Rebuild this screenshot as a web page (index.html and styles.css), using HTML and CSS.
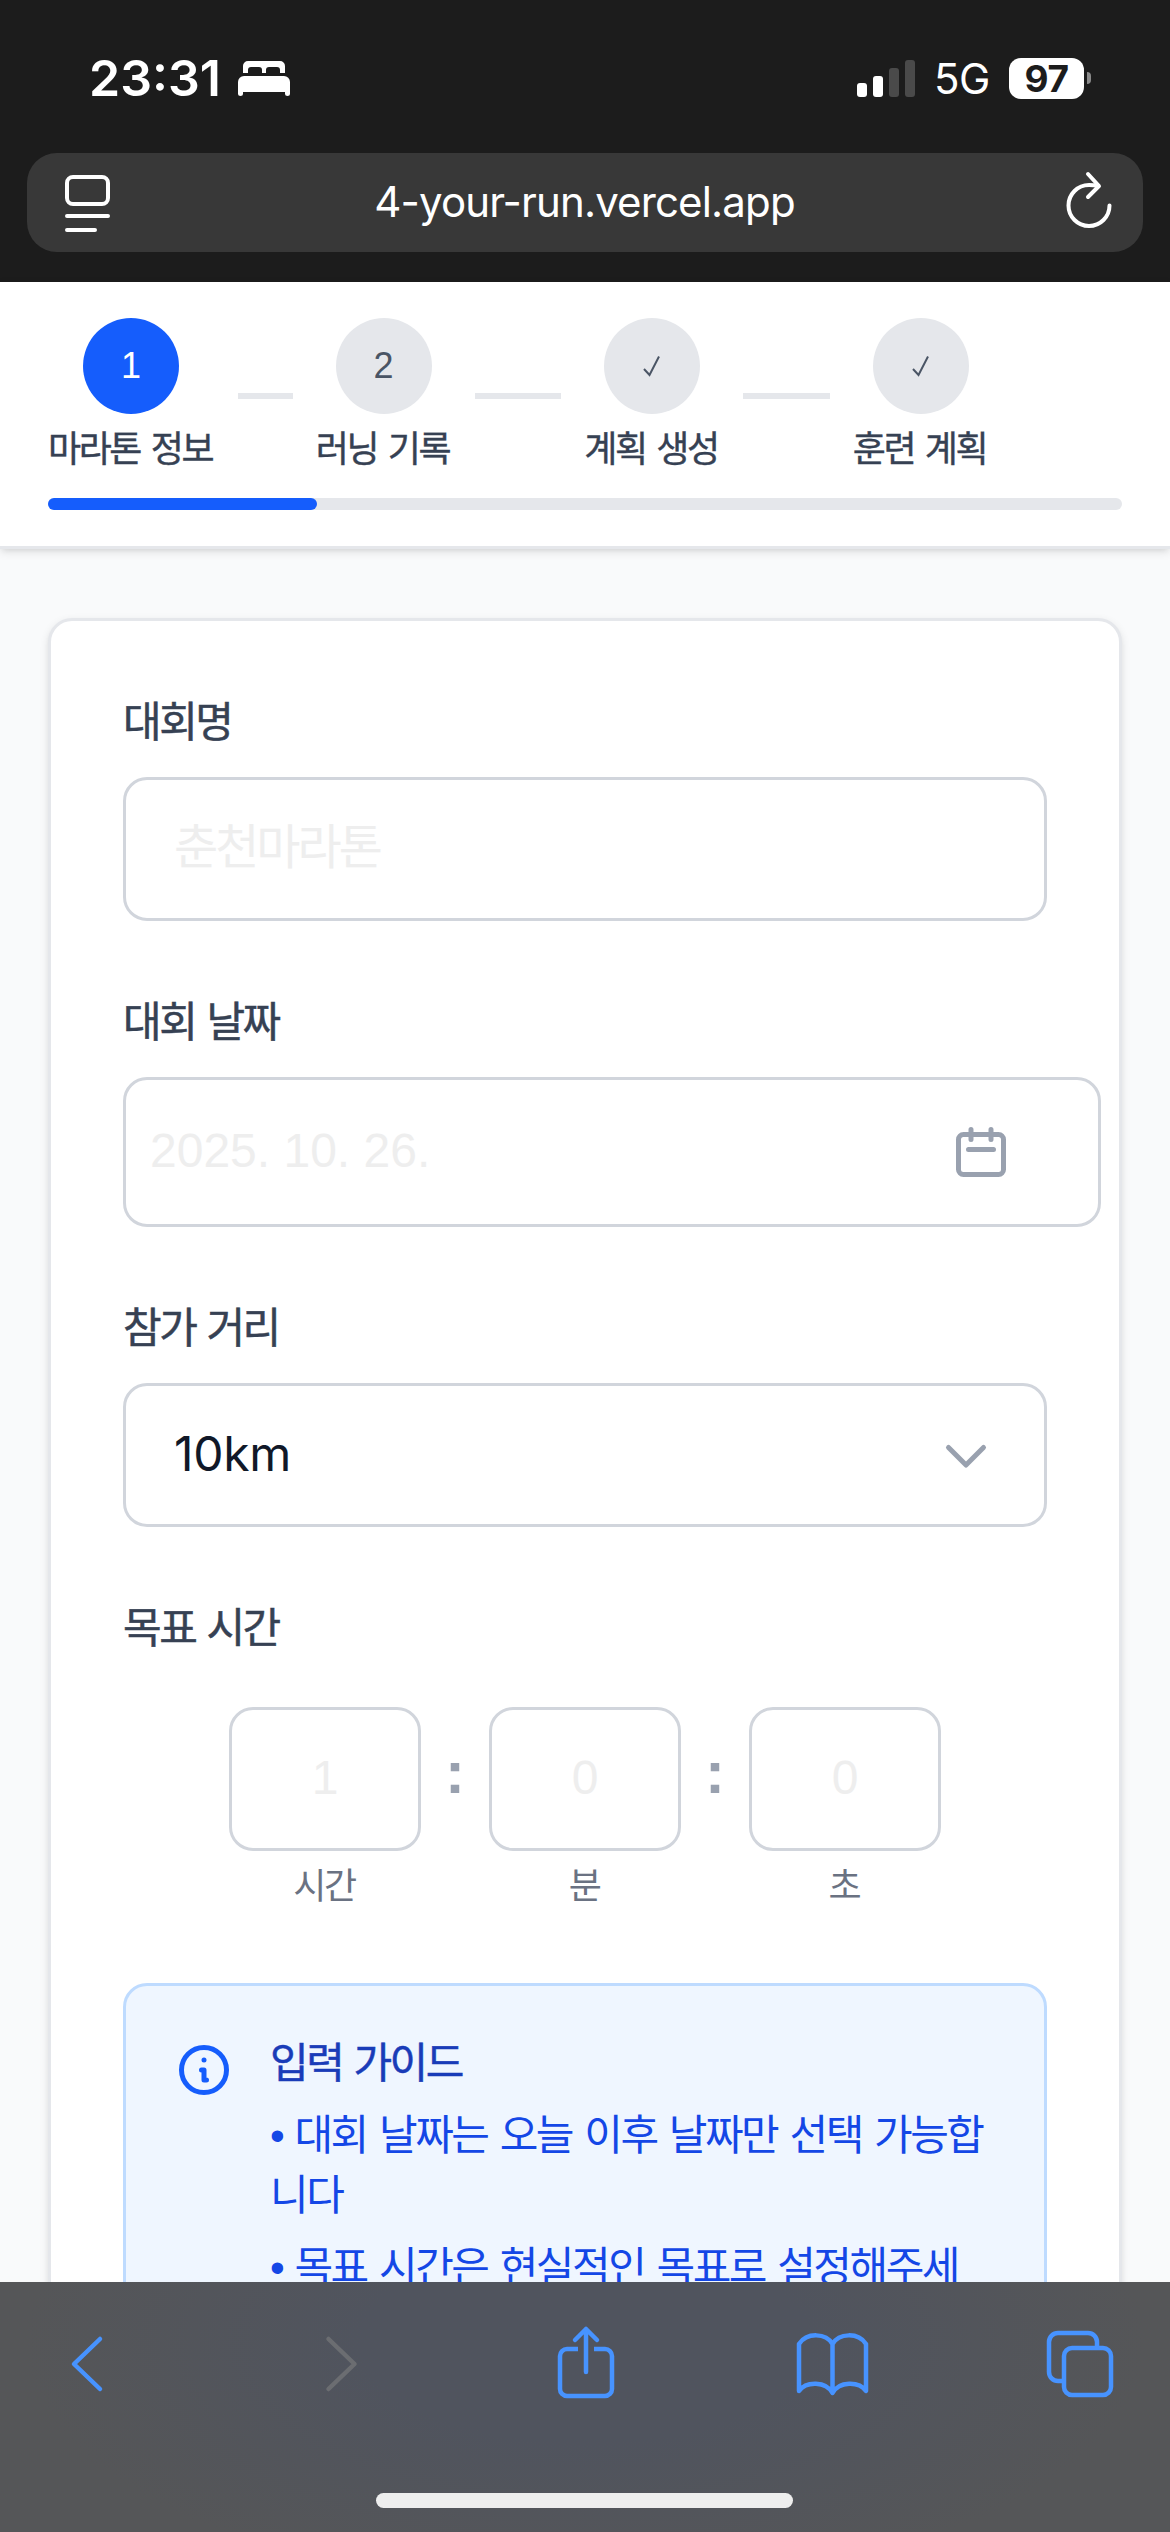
FILE: index.html
```html
<!DOCTYPE html>
<html lang="ko">
<head>
    <meta charset="UTF-8">
    <meta name="viewport" content="width=device-width, initial-scale=1.0">
    <title>4 Your Run</title>
    <link rel="stylesheet" href="styles.css">
</head>
<body>
    <div class="screen">
        <header class="browser-top">
            <div class="status-bar">
                <div class="status-left">
                    <span class="time">23:31</span>
                    <svg class="bed" width="52" height="36" viewBox="0 0 52 36" fill="#fff">
                        <path d="M5 12V5a5 5 0 0 1 5-5h32a5 5 0 0 1 5 5v7h-5V9a3 3 0 0 0-3-3h-8a3 3 0 0 0-3 3v3h-4V9a3 3 0 0 0-3-3h-8a3 3 0 0 0-3 3v3z"/>
                        <path d="M0 21a6 6 0 0 1 6-6h40a6 6 0 0 1 6 6v12q0 2-2.500 2T47 33v-2H5v2q0 2-2.500 2T0 33z"/>
                    </svg>
                </div>
                <div class="status-right">
                    <svg width="59" height="37" viewBox="0 0 59 37">
                        <rect x="0" y="23" width="10" height="14" rx="3" fill="#fff"/>
                        <rect x="16" y="16" width="10" height="21" rx="3" fill="#fff"/>
                        <rect x="32" y="8" width="10" height="29" rx="3" fill="#4a4a4a"/>
                        <rect x="48" y="0" width="10" height="37" rx="3" fill="#4a4a4a"/>
                    </svg>
                    <span class="network">5G</span>
                    <div class="battery">97</div>
                    <div class="battery-tip"></div>
                </div>
            </div>
            <div class="address-bar">
                <svg width="46" height="58" viewBox="0 0 46 58" fill="none" stroke="#fff" stroke-width="4" stroke-linecap="round">
                    <rect x="2" y="3" width="41" height="27" rx="6"/>
                    <path d="M2 42h41M2 56h28"/>
                </svg>
                <span class="url">4-your-run.vercel.app</span>
                <svg class="reload" width="48" height="58" viewBox="0 0 48 58" fill="none" stroke="#fff" stroke-width="4" stroke-linecap="round" stroke-linejoin="round">
                    <path d="M44.500 34.500a20.500 20.500 0 1 1-20.500-20.500q5 0 9 .800"/>
                    <path d="M23 3l11 12-11 11"/>
                </svg>
            </div>
        </header>

        <nav class="progress-nav">
            <div class="steps">
                <div class="step">
                    <div class="step-item step-first">
                        <div class="circle active">1</div>
                        <span class="step-label">마라톤 정보</span>
                    </div>
                    <div class="connector"></div>
                </div>
                <div class="step">
                    <div class="step-item">
                        <div class="circle">2</div>
                        <span class="step-label">러닝 기록</span>
                    </div>
                    <div class="connector"></div>
                </div>
                <div class="step">
                    <div class="step-item">
                        <div class="circle">
                            <svg width="20" height="22" viewBox="0 0 20 22" fill="none" stroke="#4a5565" stroke-width="2"><path d="M2 14l5.500 6L17 1.500"/></svg>
                        </div>
                        <span class="step-label">계획 생성</span>
                    </div>
                    <div class="connector"></div>
                </div>
                <div class="step">
                    <div class="step-item">
                        <div class="circle">
                            <svg width="20" height="22" viewBox="0 0 20 22" fill="none" stroke="#4a5565" stroke-width="2"><path d="M2 14l5.500 6L17 1.500"/></svg>
                        </div>
                        <span class="step-label">훈련 계획</span>
                    </div>
                </div>
            </div>
            <div class="progress-track">
                <div class="progress-fill" style="width: 25%"></div>
            </div>
        </nav>

        <main class="content">
            <form class="card">
                <div class="field">
                    <div class="label">대회명</div>
                    <div class="input placeholder">춘천마라톤</div>
                </div>

                <div class="field">
                    <div class="label">대회 날짜</div>
                    <div class="input date">
                        <span>2025. 10. 26.</span>
                        <svg class="icon" viewBox="0 0 24 24"><path d="M8 7V3m8 4V3m-9 8h10M5 21h14a2 2 0 002-2V7a2 2 0 00-2-2H5a2 2 0 00-2 2v12a2 2 0 002 2z"/></svg>
                    </div>
                </div>

                <div class="field">
                    <div class="label">참가 거리</div>
                    <div class="input select">
                        <span>10km</span>
                        <svg class="icon" viewBox="0 0 24 24"><path d="M19 9l-7 7-7-7"/></svg>
                    </div>
                </div>

                <div class="field">
                    <div class="label">목표 시간</div>
                    <div class="time-row">
                        <div class="time-unit">
                            <div class="time-box">1</div>
                            <span>시간</span>
                        </div>
                        <span class="colon">:</span>
                        <div class="time-unit">
                            <div class="time-box">0</div>
                            <span>분</span>
                        </div>
                        <span class="colon">:</span>
                        <div class="time-unit">
                            <div class="time-box">0</div>
                            <span>초</span>
                        </div>
                    </div>
                </div>

                <div class="guide">
                    <svg class="icon info" viewBox="0 0 24 24"><path d="M13 16h-1v-4h-1m1-4h.01M21 12a9 9 0 11-18 0 9 9 0 0118 0z"/></svg>
                    <div class="guide-text">
                        <h3>입력 가이드</h3>
                        <p>• 대회 날짜는 오늘 이후 날짜만 선택 가능합<br>니다</p>
                        <p>• 목표 시간은 현실적인 목표로 설정해주세</p>
                    </div>
                </div>
            </form>
        </main>

        <footer class="toolbar">
            <div class="tools">
                <svg viewBox="0 0 80 80"><path d="M54 15L28 40l26 25"/></svg>
                <svg class="disabled" viewBox="0 0 80 80"><path d="M33.500 15l26 25-26 25"/></svg>
                <svg viewBox="0 0 80 80">
                    <path stroke-linecap="butt" d="M34 25H23a7 7 0 0 0-7 7v33a7 7 0 0 0 7 7h38a7 7 0 0 0 7-7V32a7 7 0 0 0-7-7H50"/>
                    <path d="M42 48V5M31 16L42 5l11 11"/>
                </svg>
                <svg viewBox="0 0 80 80">
                    <path d="M39.500 20V67M39.500 20C33 9 14 8 6 20v47c7-10 27-10 33.500 2 6.500-12 26.500-12 33.500-2V20C65 8 46 9 39.500 20z"/>
                </svg>
                <svg viewBox="0 0 80 80">
                    <path stroke-linecap="butt" d="M20 57h-4a9 9 0 0 1-9-9V18a9 9 0 0 1 9-9h30a9 9 0 0 1 9 9v4"/>
                    <rect x="22" y="24" width="47" height="47" rx="8"/>
                </svg>
            </div>
            <div class="home-indicator"></div>
        </footer>
    </div>
</body>
</html>
```
FILE: styles.css
```css
* {
    box-sizing: border-box;
}
body {
    margin: 0;
    font-family: "Liberation Sans", "Noto Sans CJK KR", sans-serif;
    background: #f9fafb;
}
svg {
    display: block;
    flex-shrink: 0;
}
.screen {
    display: flex;
    flex-direction: column;
    width: 1170px;
    height: 2532px;
    overflow: hidden;
}

/* browser top */
.browser-top {
    flex: none;
    height: 282px;
    padding: 48px 27px 0;
    background: #1c1c1c;
    color: #fff;
    font-family: Inter, sans-serif;
}
.status-bar {
    display: flex;
    justify-content: space-between;
    height: 105px;
    padding: 0 52px 0 62px;
}
.status-left,
.status-right {
    display: flex;
    align-items: center;
    height: 60px;
}
.time {
    width: 149px;
    font-size: 50px;
    font-weight: 600;
}
.bed {
    margin-top: 2px;
}
.network {
    width: 76px;
    margin-left: 18px;
    font-size: 42px;
    letter-spacing: -0.5px;
}
.battery {
    width: 75px;
    height: 41px;
    margin-left: -1px;
    border-radius: 12px;
    background: #fff;
    color: #1c1c1c;
    font-size: 37px;
    font-weight: 700;
    line-height: 41px;
    letter-spacing: -0.5px;
    text-align: center;
}
.battery-tip {
    width: 4px;
    height: 12px;
    margin-left: 3px;
    border-radius: 0 6px 6px 0;
    background: #8a8a8a;
}
.address-bar {
    display: flex;
    align-items: center;
    justify-content: space-between;
    height: 99px;
    padding: 0 30px 0 38px;
    border-radius: 30px;
    background: #383838;
}
.url {
    margin-right: 7px;
    padding-bottom: 1px;
    font-size: 42px;
    line-height: 60px;
    letter-spacing: -0.85px;
}
.reload {
    margin-bottom: 5px;
}

/* steps */
.progress-nav {
    position: relative;
    flex: none;
    padding: 36px 48px;
    background: #fff;
    border-bottom: 3px solid #e5e7eb;
    box-shadow: 0 3px 9px rgba(0, 0, 0, 0.1), 0 3px 6px -3px rgba(0, 0, 0, 0.1);
}
.steps {
    display: grid;
    grid-template-columns: repeat(4, 1fr);
}
.step {
    display: flex;
    align-items: center;
}
.step-item {
    display: flex;
    flex-direction: column;
    align-items: center;
    width: 134px;
}
.step-first {
    width: 166px;
}
.circle {
    display: flex;
    align-items: center;
    justify-content: center;
    width: 96px;
    height: 96px;
    border-radius: 50%;
    background: #e5e7eb;
    color: #4a5565;
    font-size: 36px;
}
.circle.active {
    background: #155dfc;
    color: #fff;
}
.step-label {
    margin-top: 12px;
    padding-right: 2px;
    color: #364153;
    font-size: 36px;
    line-height: 48px;
    letter-spacing: -2.4px;
    word-spacing: 3px;
    white-space: nowrap;
    -webkit-text-stroke: 0.4px #364153;
}
.connector {
    flex: 1;
    height: 6px;
    margin: 0 24px;
    background: #e5e7eb;
}
.progress-track {
    height: 12px;
    margin-top: 24px;
    border-radius: 6px;
    background: #e5e7eb;
}
.progress-fill {
    height: 12px;
    border-radius: 6px;
    background: #155dfc;
}

/* form */
.content {
    flex: 1;
    min-height: 0;
    padding: 69px 48px 0;
    overflow: hidden;
}
.card {
    display: flex;
    flex-direction: column;
    gap: 72px;
    padding: 72px;
    background: #fff;
    border: 3px solid #e5e7eb;
    border-radius: 24px;
    box-shadow: 0 3px 9px rgba(0, 0, 0, 0.1), 0 3px 6px -3px rgba(0, 0, 0, 0.1);
}
.label {
    margin-bottom: 24px;
    color: #364153;
    font-size: 42px;
    line-height: 60px;
    letter-spacing: -2.5px;
    word-spacing: 2px;
    -webkit-text-stroke: 0.5px #364153;
}
.input {
    display: flex;
    align-items: center;
    justify-content: space-between;
    height: 144px;
    padding: 0 48px;
    border: 3px solid #d1d5dc;
    border-radius: 24px;
    background: #fff;
    font-size: 48px;
}
.input span {
    padding-bottom: 4px;
}
.placeholder {
    padding-bottom: 12px;
    color: #eee;
    letter-spacing: -3px;
}
.date {
    width: 978px;
    height: 150px;
    padding: 0 87px 0 24px;
    color: #eee;
}
.select {
    color: #101828;
    font-family: Inter, sans-serif;
    letter-spacing: -0.3px;
}
.icon {
    width: 60px;
    height: 60px;
    fill: none;
    stroke: #99a1af;
    stroke-width: 2;
    stroke-linecap: round;
    stroke-linejoin: round;
}
.time-row {
    display: flex;
    justify-content: center;
    gap: 24px;
    padding-top: 24px;
}
.time-unit {
    display: flex;
    flex-direction: column;
    align-items: center;
    gap: 12px;
    color: #6a7282;
    font-size: 36px;
    line-height: 48px;
    letter-spacing: -2.4px;
}
.time-unit span {
    padding-right: 2px;
}
.time-box {
    width: 192px;
    height: 144px;
    border: 3px solid #d1d5dc;
    border-radius: 24px;
    color: #eee;
    font-size: 48px;
    line-height: 136px;
    letter-spacing: 0;
    text-align: center;
}
.colon {
    color: #99a1af;
    font-size: 60px;
    font-weight: 700;
    line-height: 132px;
}
.guide {
    display: flex;
    padding: 48px;
    border: 3px solid #bedbff;
    border-radius: 24px;
    background: #eff6ff;
}
.info {
    margin: 6px 36px 0 0;
    stroke: #155dfc;
}
.guide-text {
    color: #1447e6;
    font-size: 42px;
    line-height: 60px;
    letter-spacing: -2.5px;
    word-spacing: 3.1px;
    white-space: nowrap;
}
.guide-text h3 {
    margin: 0;
    color: #193cb8;
    font-size: 42px;
    font-weight: 400;
    word-spacing: 2px;
    -webkit-text-stroke: 0.5px #193cb8;
}
.guide-text p {
    margin: 12px 0 0;
}

/* browser bottom */
.toolbar {
    position: relative;
    display: flex;
    flex: none;
    flex-direction: column;
    align-items: center;
    justify-content: space-between;
    height: 250px;
    padding: 42px 48px 24px 46px;
    background: radial-gradient(ellipse 560px 250px at 585px 60px, #50545e 40%, #555658 100%);
}
.tools {
    display: flex;
    justify-content: space-between;
    width: 100%;
}
.tools svg {
    width: 80px;
    height: 80px;
    fill: none;
    stroke: #4793ff;
    stroke-width: 4.5;
    stroke-linecap: round;
    stroke-linejoin: round;
}
.tools .disabled {
    stroke: #6b6d71;
}
.home-indicator {
    width: 417px;
    height: 15px;
    border-radius: 8px;
    background: #eee;
}
```
